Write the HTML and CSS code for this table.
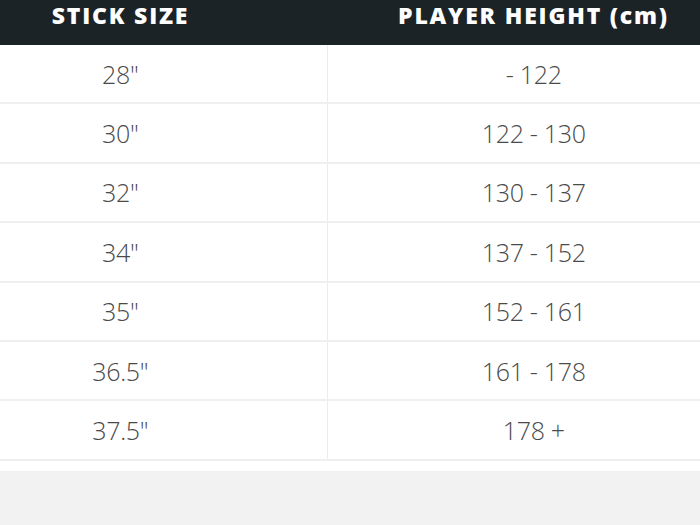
FILE: index.html
```html
<!DOCTYPE html>
<html>
<head>
<meta charset="utf-8">
<link rel="stylesheet" href="styles.css">
</head>
<body>
<div class="wrap">
  <table class="size">
    <thead>
      <tr><th>STICK SIZE</th><th>PLAYER HEIGHT (cm)</th></tr>
    </thead>
    <tbody>
      <tr><td>28"</td><td>- 122</td></tr>
      <tr><td>30"</td><td>122 - 130</td></tr>
      <tr><td>32"</td><td>130 - 137</td></tr>
      <tr><td>34"</td><td>137 - 152</td></tr>
      <tr><td>35"</td><td>152 - 161</td></tr>
      <tr><td>36.5"</td><td>161 - 178</td></tr>
      <tr><td>37.5"</td><td>178 +</td></tr>
    </tbody>
  </table>
</div>
</body>
</html>
```

FILE: styles.css
```css
html, body {
  margin: 0;
  padding: 0;
  background: #f2f2f2;
  overflow: hidden;
}
.wrap {
  background: #fff;
  padding-bottom: 10px;
  overflow: hidden;
}
.size {
  border-collapse: collapse;
  width: 826px;
  margin: -15px 0 0 -86px;
  table-layout: fixed;
}
.size th {
  background: #1c2326;
  color: #fff;
  height: 60px;
  padding: 0;
  font-family: "Open Sans", "DejaVu Sans", sans-serif;
  font-weight: 800;
  font-size: 23px;
  letter-spacing: 1.8px;
  text-align: center;
  vertical-align: middle;
}
.size td {
  height: 57.4px;
  padding: 0;
  font-family: "Open Sans", "DejaVu Sans", sans-serif;
  font-weight: 300;
  font-size: 25px;
  letter-spacing: -0.3px;
  color: #4a4a4a;
  text-align: center;
  vertical-align: middle;
  border-bottom: 2px solid #efefef;
}
.size td:first-child {
  border-right: 1px solid #ececec;
}
```
